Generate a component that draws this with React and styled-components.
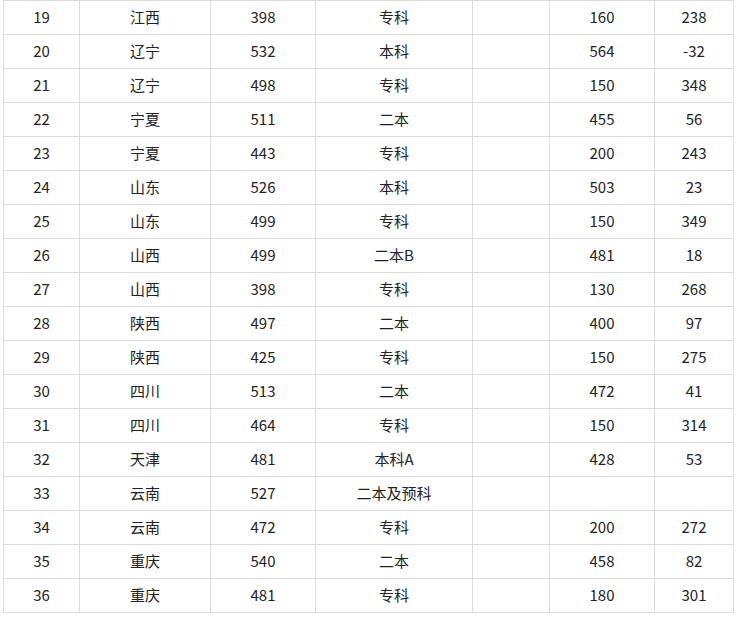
import React from "react";
import styled, { createGlobalStyle } from "styled-components";

const GlobalStyle = createGlobalStyle`
  html, body {
    margin: 0;
    padding: 0;
    background: #fff;
  }
`;

const Wrapper = styled.main`
  padding: 0 0 0 3px;
  width: 736px;
  height: 619px;
  overflow: hidden;
  box-sizing: border-box;
  background: #fff;
`;

const Table = styled.table`
  border-collapse: collapse;
  table-layout: fixed;
  width: 730px;
  font-family: "Microsoft YaHei", "Noto Sans CJK SC", "Noto Sans", sans-serif;
  font-size: 15px;
  color: #222;
`;

const Row = styled.tr`
  height: 34px;
`;

const Cell = styled.td`
  border: 1px solid #dcdcdc;
  padding: 0 0 2px;
  text-align: center;
  vertical-align: middle;
  line-height: 31px;
  white-space: nowrap;
`;

// 열 너비
const widths = [76, 131, 105, 157, 77, 105, 79];

const rows = [
  ["19", "江西", "398", "专科", "", "160", "238"],
  ["20", "辽宁", "532", "本科", "", "564", "-32"],
  ["21", "辽宁", "498", "专科", "", "150", "348"],
  ["22", "宁夏", "511", "二本", "", "455", "56"],
  ["23", "宁夏", "443", "专科", "", "200", "243"],
  ["24", "山东", "526", "本科", "", "503", "23"],
  ["25", "山东", "499", "专科", "", "150", "349"],
  ["26", "山西", "499", "二本B", "", "481", "18"],
  ["27", "山西", "398", "专科", "", "130", "268"],
  ["28", "陕西", "497", "二本", "", "400", "97"],
  ["29", "陕西", "425", "专科", "", "150", "275"],
  ["30", "四川", "513", "二本", "", "472", "41"],
  ["31", "四川", "464", "专科", "", "150", "314"],
  ["32", "天津", "481", "本科A", "", "428", "53"],
  ["33", "云南", "527", "二本及预科", "", "", ""],
  ["34", "云南", "472", "专科", "", "200", "272"],
  ["35", "重庆", "540", "二本", "", "458", "82"],
  ["36", "重庆", "481", "专科", "", "180", "301"],
];

function App() {
  return (
    <>
      <GlobalStyle />
      <Wrapper>
        <Table>
          <colgroup>
            {widths.map((w, i) => (
              <col key={i} style={{ width: w }} />
            ))}
          </colgroup>
          <tbody>
            {rows.map((r) => (
              <Row key={r[0]}>
                {r.map((c, i) => (
                  <Cell key={i}>{c}</Cell>
                ))}
              </Row>
            ))}
          </tbody>
        </Table>
      </Wrapper>
    </>
  );
}

export default App;
